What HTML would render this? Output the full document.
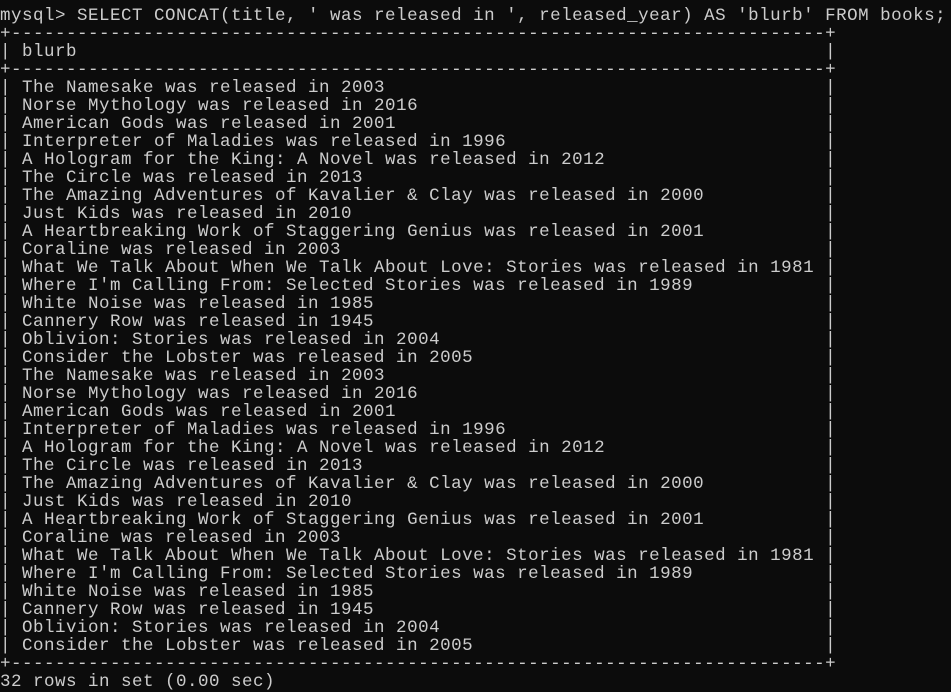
<!DOCTYPE html>
<html><head><meta charset="utf-8"><style>
html,body{margin:0;padding:0;background:#0c0c0c;width:951px;height:677px;overflow:hidden}
pre{margin:0;position:absolute;left:0;top:7px;font-family:"Liberation Mono",monospace;font-size:17.5px;letter-spacing:0.5px;line-height:18px;color:#cccccc;white-space:pre}
</style></head><body><pre>mysql&gt; SELECT CONCAT(title, ' was released in ', released_year) AS 'blurb' FROM books;
+--------------------------------------------------------------------------+
| blurb                                                                    |
+--------------------------------------------------------------------------+
| The Namesake was released in 2003                                        |
| Norse Mythology was released in 2016                                     |
| American Gods was released in 2001                                       |
| Interpreter of Maladies was released in 1996                             |
| A Hologram for the King: A Novel was released in 2012                    |
| The Circle was released in 2013                                          |
| The Amazing Adventures of Kavalier &amp; Clay was released in 2000           |
| Just Kids was released in 2010                                           |
| A Heartbreaking Work of Staggering Genius was released in 2001           |
| Coraline was released in 2003                                            |
| What We Talk About When We Talk About Love: Stories was released in 1981 |
| Where I'm Calling From: Selected Stories was released in 1989            |
| White Noise was released in 1985                                         |
| Cannery Row was released in 1945                                         |
| Oblivion: Stories was released in 2004                                   |
| Consider the Lobster was released in 2005                                |
| The Namesake was released in 2003                                        |
| Norse Mythology was released in 2016                                     |
| American Gods was released in 2001                                       |
| Interpreter of Maladies was released in 1996                             |
| A Hologram for the King: A Novel was released in 2012                    |
| The Circle was released in 2013                                          |
| The Amazing Adventures of Kavalier &amp; Clay was released in 2000           |
| Just Kids was released in 2010                                           |
| A Heartbreaking Work of Staggering Genius was released in 2001           |
| Coraline was released in 2003                                            |
| What We Talk About When We Talk About Love: Stories was released in 1981 |
| Where I'm Calling From: Selected Stories was released in 1989            |
| White Noise was released in 1985                                         |
| Cannery Row was released in 1945                                         |
| Oblivion: Stories was released in 2004                                   |
| Consider the Lobster was released in 2005                                |
+--------------------------------------------------------------------------+
32 rows in set (0.00 sec)</pre></body></html>
